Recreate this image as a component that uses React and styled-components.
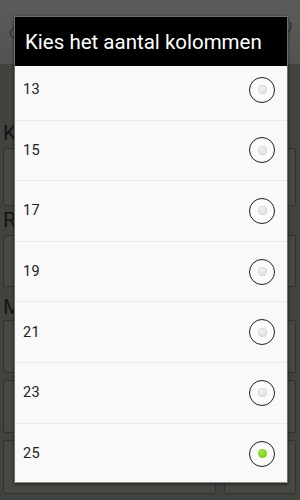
import React from 'react';
import styled, { createGlobalStyle } from 'styled-components';

const GlobalStyle = createGlobalStyle`
  html, body {
    margin: 0;
    padding: 0;
    width: 300px;
    height: 500px;
    overflow: hidden;
    background: #3f413d;
    font-family: Roboto, "Noto Sans", sans-serif;
  }
`;

const Screen = styled.div`
  position: relative;
  width: 300px;
  height: 500px;
  overflow: hidden;
  background: #41433f;
`;

/* dimmed app behind the dialog */
const AppHeader = styled.div`
  height: 64px;
  background: linear-gradient(#5b5b5b, #525351);
  display: flex;
  align-items: center;
  justify-content: space-between;
  padding: 0 6px;
`;

const AppBody = styled.div`
  display: flex;
  flex-direction: column;
  padding: 57px 4px 0 3px;
`;

const Label = styled.div`
  font-size: 21px;
  color: #151614;
  line-height: 24px;
  margin-top: ${p => p.$top || 0}px;
`;

const Field = styled.div`
  box-sizing: border-box;
  height: ${p => p.$h || 52}px;
  margin-top: ${p => p.$top || 0}px;
  background: #464843;
  border: 1px solid #30322e;
  border-radius: 2px;
`;

const ButtonRow = styled.div`
  display: flex;
  gap: 8px;
  margin-top: 7px;
`;

const Btn = styled.div`
  box-sizing: border-box;
  flex: ${p => p.$grow || 1};
  height: ${p => p.$h || 53}px;
  background: #464843;
  border: 1px solid #30322e;
  border-radius: 2px;
`;

/* dialog */
const Dialog = styled.div`
  position: absolute;
  left: 14px;
  top: 16px;
  width: 274px;
  height: 467px;
  display: flex;
  flex-direction: column;
  border: 1px solid #6f706e;
  border-bottom-color: #8a8a8a;
  box-shadow: 0 1px 3px rgba(0, 0, 0, 0.6);
  box-sizing: border-box;
  overflow: hidden;
`;

const Title = styled.div`
  height: 49px;
  flex: none;
  background: #000;
  color: #fff;
  font-size: 20.5px;
  line-height: 51px;
  padding-left: 10px;
  white-space: nowrap;
`;

const List = styled.div`
  flex: 1;
  background: #f9f9f9;
  overflow: hidden;
`;

const Scroller = styled.div`
  margin-top: -6px;
`;

const Row = styled.div`
  height: 60.6px;
  box-sizing: border-box;
  display: flex;
  align-items: center;
  justify-content: space-between;
  padding: 0 12px 0 8px;
  border-bottom: 1px solid #e9e9e9;
  &:last-child {
    border-bottom: none;
  }
`;

const Num = styled.span`
  font-size: 14.5px;
  color: #222;
  letter-spacing: 0.3px;
`;

const Radio = styled.span`
  width: 24px;
  height: 24px;
  border: 1.3px solid #1e1e1e;
  border-radius: 50%;
  display: flex;
  align-items: center;
  justify-content: center;
  background: #fbfbfb;
`;

const Dot = styled.span`
  width: 9px;
  height: 9px;
  border-radius: 50%;
  background: ${p =>
    p.$on
      ? 'radial-gradient(circle at 40% 35%, #9be83a, #6fc40e)'
      : 'radial-gradient(circle at 40% 35%, #f2f2f2, #d6d6d6)'};
  box-shadow: ${p => (p.$on ? 'none' : 'inset 0 0 0 0.5px #cfcfcf')};
`;

const options = [13, 15, 17, 19, 21, 23, 25];

export default function App() {
  const selected = 25;
  return (
    <>
      <GlobalStyle />
      <Screen>
        <AppHeader>
          <svg width="14" height="20" viewBox="0 0 14 20">
            <path d="M12 6 C4 4 2 14 8 16" fill="none" stroke="#222" strokeWidth="1" />
          </svg>
          <svg width="26" height="20" viewBox="0 0 26 20">
            <circle cx="14" cy="4" r="9" fill="none" stroke="#222" strokeWidth="1" />
          </svg>
        </AppHeader>
        <AppBody>
          <Label>K</Label>
          <Field $top={3} $h={58} />
          <Label $top={2}>R</Label>
          <Field $top={3} $h={52} />
          <Label $top={8}>M</Label>
          <Field $top={1} $h={53} />
          <ButtonRow>
            <Btn $grow={3} />
            <Btn $grow={1} />
          </ButtonRow>
          <ButtonRow>
            <Btn $grow={3} $h={54} />
            <Btn $grow={1} $h={54} />
          </ButtonRow>
        </AppBody>

        <Dialog>
          <Title>Kies het aantal kolommen</Title>
          <List>
            <Scroller>
              {options.map(n => (
                <Row key={n}>
                  <Num>{n}</Num>
                  <Radio>
                    <Dot $on={n === selected} />
                  </Radio>
                </Row>
              ))}
            </Scroller>
          </List>
        </Dialog>
      </Screen>
    </>
  );
}
